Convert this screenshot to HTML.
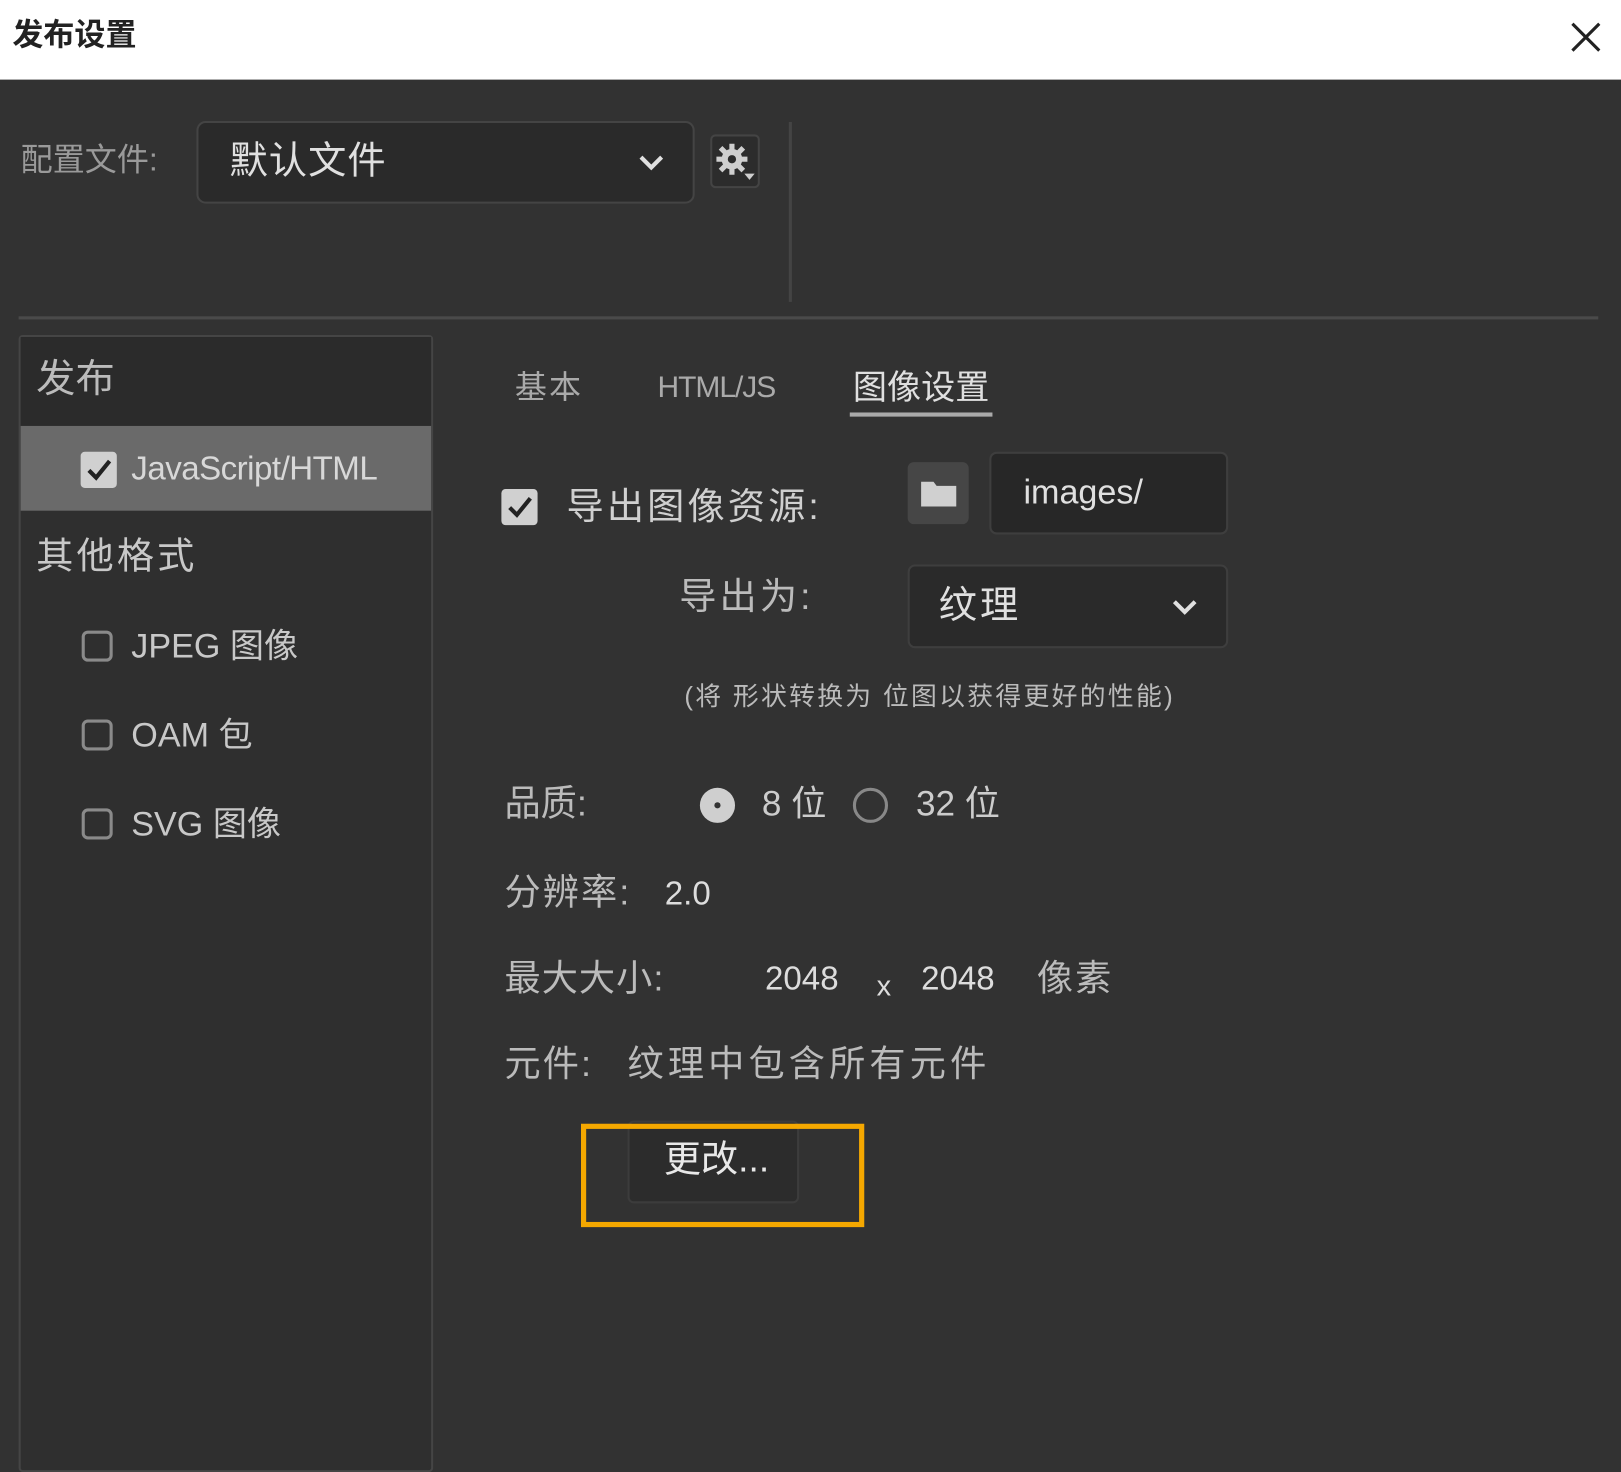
<!DOCTYPE html>
<html><head><meta charset="utf-8"><style>
html,body{margin:0;padding:0;width:1621px;height:1466px;overflow:hidden;background:#323232;}
#w{position:absolute;left:0;top:0;width:1568px;height:1418px;transform:scale(1.03380);transform-origin:0 0;background:#323232;font-family:"Liberation Sans","Noto Sans CJK SC",sans-serif;color:#c8c8c8;}
.a{position:absolute;white-space:nowrap;line-height:1;}
.cb{position:absolute;width:30px;height:30px;border:3px solid #8a8a8a;border-radius:6px;box-sizing:border-box;}
.cbc{position:absolute;width:35px;height:35px;background:#d0d0d0;border-radius:4px;}
</style></head><body><div id="w">
<div class="a" style="left:0;top:0;width:1568px;height:77px;background:#fff;"></div>
<div class="a" style="left:12px;top:20px;font-size:30px;color:#222;font-weight:bold;">发布设置</div>
<svg class="a" style="left:1518px;top:20px" width="32" height="32"><path d="M3 3L29 29M29 3L3 29" stroke="#222" stroke-width="3"/></svg>

<div class="a" style="left:20px;top:139px;font-size:31px;color:#9a9a9a;">配置文件:</div>
<div class="a" style="left:190px;top:117px;width:482px;height:80px;box-sizing:border-box;border:2px solid #444;border-radius:9px;background:#2a2a2a;"></div>
<div class="a" style="left:222px;top:137px;font-size:37px;color:#e0e0e0;letter-spacing:1px;">默认文件</div>
<svg class="a" style="left:617px;top:148px" width="26" height="18"><path d="M3 4L13 14L23 4" fill="none" stroke="#e0e0e0" stroke-width="4"/></svg>
<div class="a" style="left:687px;top:130px;width:48px;height:52px;box-sizing:border-box;border:2px solid #444;border-radius:5px;background:#2c2c2c;"></div>
<svg class="a" style="left:690px;top:136px" width="44" height="42"><circle cx="18" cy="18" r="10" fill="#cfcfcf"/><g stroke="#cfcfcf" stroke-width="5"><path d="M18 3V33M3 18H33M7 7L29 29M29 7L7 29"/></g><circle cx="18" cy="18" r="4" fill="#2c2c2c"/><path d="M30 32h10l-5 6z" fill="#cfcfcf"/></svg>
<div class="a" style="left:763px;top:118px;width:3px;height:174px;background:#444;"></div>
<div class="a" style="left:18px;top:306px;width:1528px;height:3px;background:#4a4a4a;"></div>

<div class="a" style="left:18px;top:324px;width:401px;height:1100px;box-sizing:border-box;border:2px solid #454545;border-radius:4px;background:#2f2f2f;"></div>
<div class="a" style="left:20px;top:326px;width:397px;height:86px;background:#2b2b2b;"></div>
<div class="a" style="left:35px;top:348px;font-size:38px;color:#bbb;">发布</div>
<div class="a" style="left:20px;top:412px;width:397px;height:82px;background:#6a6a6a;"></div>
<div class="cbc" style="left:78px;top:437px;"></div>
<svg class="a" style="left:80px;top:440px" width="32" height="30"><path d="M6 15L13 22L26 6" fill="none" stroke="#222" stroke-width="4"/></svg>
<div class="a" style="left:127px;top:437px;font-size:32px;color:#d8d8d8;letter-spacing:-0.5px;">JavaScript/HTML</div>
<div class="a" style="left:35px;top:520px;font-size:36px;color:#c8c8c8;letter-spacing:3px;">其他格式</div>
<div class="cb" style="left:79px;top:610px;"></div>
<div class="a" style="left:127px;top:608px;font-size:33px;">JPEG 图像</div>
<div class="cb" style="left:79px;top:696px;"></div>
<div class="a" style="left:127px;top:694px;font-size:33px;">OAM 包</div>
<div class="cb" style="left:79px;top:782px;"></div>
<div class="a" style="left:127px;top:780px;font-size:33px;">SVG 图像</div>

<div class="a" style="left:498px;top:359px;font-size:31px;color:#aaa;letter-spacing:2px;">基本</div>
<div class="a" style="left:636px;top:361px;font-size:29px;color:#aaa;letter-spacing:-1px;">HTML/JS</div>
<div class="a" style="left:825px;top:358px;font-size:33px;color:#e0e0e0;">图像设置</div>
<div class="a" style="left:822px;top:399px;width:138px;height:4px;background:#aaa;"></div>

<div class="cbc" style="left:485px;top:473px;"></div>
<svg class="a" style="left:487px;top:476px" width="32" height="30"><path d="M6 15L13 22L26 6" fill="none" stroke="#222" stroke-width="4"/></svg>
<div class="a" style="left:548px;top:472px;font-size:36px;color:#d0d0d0;letter-spacing:3px;">导出图像资源:</div>
<div class="a" style="left:878px;top:447px;width:59px;height:60px;background:#464646;border-radius:6px;"></div>
<svg class="a" style="left:890px;top:462px" width="36" height="30"><path d="M1 4h12l3 4h19v20H1z" fill="#d0d0d0"/></svg>
<div class="a" style="left:957px;top:437px;width:231px;height:80px;box-sizing:border-box;border:2px solid #3e3e3e;border-radius:7px;background:#272727;"></div>
<div class="a" style="left:990px;top:459px;font-size:33px;color:#e0e0e0;">images/</div>

<div class="a" style="left:657px;top:559px;font-size:36px;color:#bbb;letter-spacing:3px;">导出为:</div>
<div class="a" style="left:878px;top:546px;width:310px;height:81px;box-sizing:border-box;border:2px solid #3e3e3e;border-radius:7px;background:#2a2a2a;"></div>
<div class="a" style="left:908px;top:567px;font-size:37px;color:#e0e0e0;letter-spacing:3px;">纹理</div>
<svg class="a" style="left:1133px;top:578px" width="26" height="18"><path d="M3 4L13 14L23 4" fill="none" stroke="#e0e0e0" stroke-width="4"/></svg>
<div class="a" style="left:662px;top:662px;font-size:25px;color:#bbb;letter-spacing:2.2px;">(将 形状转换为 位图以获得更好的性能)</div>

<div class="a" style="left:488px;top:760px;font-size:35px;color:#bbb;">品质:</div>
<div class="a" style="left:677px;top:762px;width:34px;height:34px;border-radius:50%;background:#cfcfcf;"></div>
<div class="a" style="left:691px;top:776px;width:6px;height:6px;border-radius:50%;background:#333;"></div>
<div class="a" style="left:737px;top:761px;font-size:34px;color:#ccc;">8 位</div>
<div class="a" style="left:825px;top:762px;width:34px;height:34px;box-sizing:border-box;border-radius:50%;border:3px solid #888;"></div>
<div class="a" style="left:886px;top:761px;font-size:34px;color:#ccc;">32 位</div>

<div class="a" style="left:488px;top:846px;font-size:35px;color:#bbb;letter-spacing:2px;">分辨率:</div>
<div class="a" style="left:643px;top:848px;font-size:32px;color:#ddd;">2.0</div>
<div class="a" style="left:488px;top:929px;font-size:35px;color:#bbb;letter-spacing:1px;">最大大小:</div>
<div class="a" style="left:740px;top:930px;font-size:32px;color:#ddd;">2048</div>
<div class="a" style="left:848px;top:940px;font-size:28px;color:#ddd;">x</div>
<div class="a" style="left:891px;top:930px;font-size:32px;color:#ddd;">2048</div>
<div class="a" style="left:1003px;top:929px;font-size:35px;color:#bbb;letter-spacing:2px;">像素</div>
<div class="a" style="left:488px;top:1012px;font-size:35px;color:#bbb;letter-spacing:2px;">元件:</div>
<div class="a" style="left:607px;top:1012px;font-size:35px;color:#bbb;letter-spacing:4px;">纹理中包含所有元件</div>

<div class="a" style="left:607px;top:1084px;width:166px;height:80px;box-sizing:border-box;border:2px solid #3c3c3c;border-radius:6px;background:#2c2c2c;"></div>
<div class="a" style="left:642px;top:1103px;font-size:36px;color:#e8e8e8;">更改...</div>
<div class="a" style="left:562px;top:1087px;width:274px;height:100px;box-sizing:border-box;border:5px solid #f5a800;"></div>
</div></body></html>
